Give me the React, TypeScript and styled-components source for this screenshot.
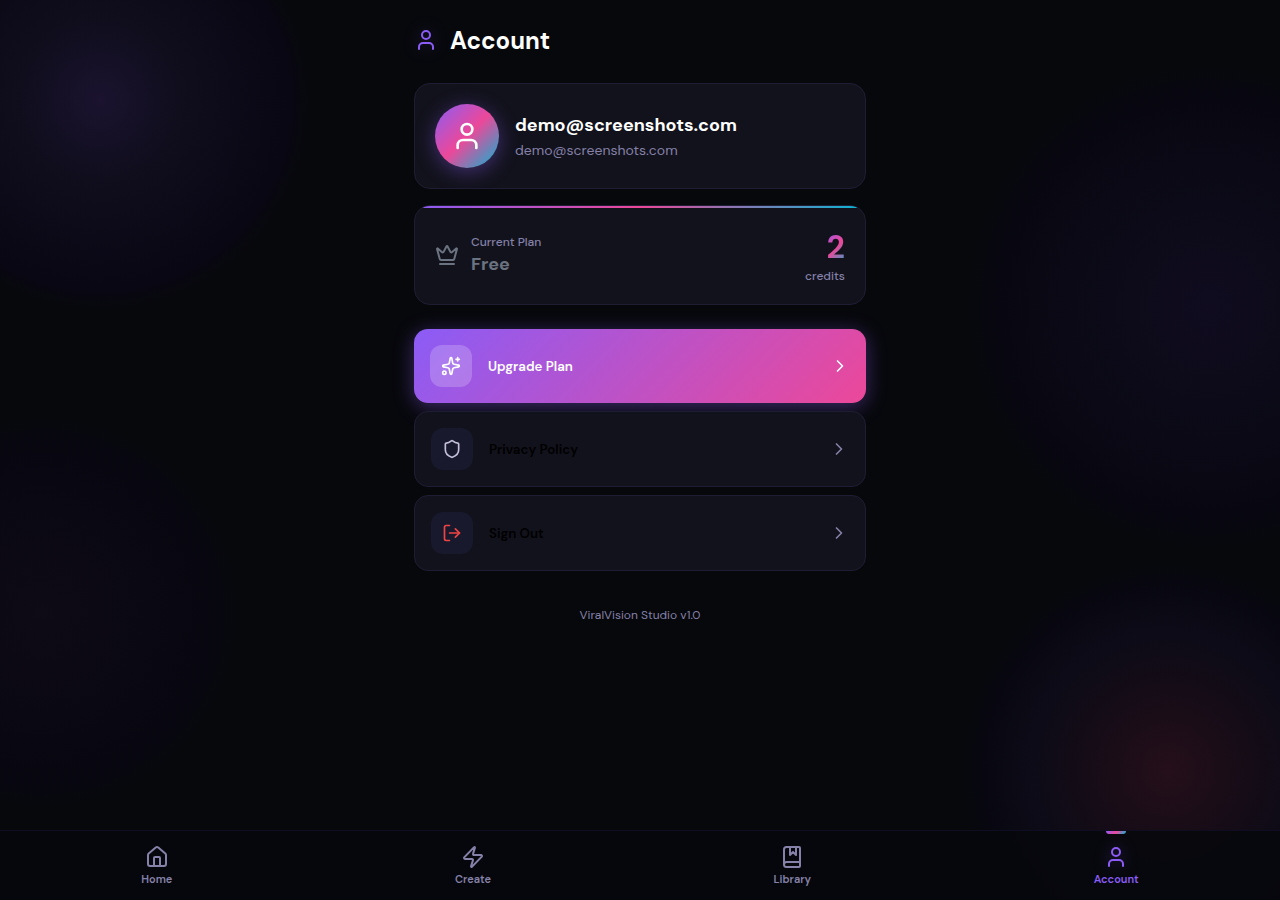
import React from 'react';
import styled, { createGlobalStyle, css } from 'styled-components';
import {
  BookMarked,
  ChevronRight,
  Crown,
  House,
  LogOut,
  Shield,
  Sparkles,
  User,
  Zap,
} from 'lucide-react';

const color = {
  page: '#07080c',
  card: '#12121c',
  border: '#1f1d33',
  tile: '#18192c',
  muted: '#8581a8',
  violet: '#8b5cf6',
  pink: '#ec4899',
  cyan: '#06b6d4',
};

const GlobalStyle = createGlobalStyle`
  *, *::before, *::after { box-sizing: border-box; }
  body {
    margin: 0;
    background: ${color.page};
    color: #fff;
    font-family: 'DM Sans', Inter, 'Liberation Sans', sans-serif;
    -webkit-font-smoothing: antialiased;
  }
`;

const Page = styled.div`
  display: flex;
  flex-direction: column;
  min-height: 100vh;
  background:
    radial-gradient(circle at 100px 100px, rgba(139, 80, 246, 0.15), rgba(120, 80, 230, 0.08) 80px, rgba(20, 0, 60, 0.15) 190px, transparent 210px),
    radial-gradient(circle at calc(100% - 72px) 307px, rgba(110, 50, 230, 0.09), rgba(90, 40, 220, 0.05) 120px, rgba(10, 0, 40, 0.15) 220px, transparent 242px),
    radial-gradient(circle at calc(100% - 112px) calc(100% - 130px), rgba(236, 62, 120, 0.13), rgba(190, 60, 150, 0.08) 80px, rgba(90, 60, 200, 0.06) 140px, rgba(10, 0, 40, 0.15) 190px, transparent 206px),
    radial-gradient(circle at 42px calc(100% - 288px), rgba(140, 50, 200, 0.05), rgba(10, 0, 40, 0.15) 176px, transparent 196px),
    ${color.page};
`;

const Main = styled.main`
  flex: 1;
  width: 100%;
  max-width: 500px;
  margin: 0 auto;
  padding: 24px;
`;

const Header = styled.header`
  display: flex;
  align-items: flex-start;
  gap: 12px;
  margin-bottom: 26px;

  svg {
    margin-top: 4px;
    color: ${color.violet};
    filter: drop-shadow(0 0 8px rgba(139, 92, 246, 0.3));
  }
`;

const Title = styled.h1`
  margin: 0;
  font-size: 24px;
  line-height: 33px;
  font-weight: 700;
`;

const Card = styled.section`
  position: relative;
  display: flex;
  align-items: center;
  padding: 20px;
  margin-bottom: 16px;
  overflow: hidden;
  background: ${color.card};
  border: 1px solid ${color.border};
  border-radius: 16px;
`;

const ProfileCard = styled(Card)`
  gap: 16px;
`;

const Avatar = styled.div`
  display: grid;
  place-items: center;
  width: 64px;
  height: 64px;
  border-radius: 50%;
  background: linear-gradient(135deg, ${color.violet}, ${color.pink} 50%, ${color.cyan});
  box-shadow: 0 4px 20px rgba(139, 92, 246, 0.4);
`;

const Name = styled.div`
  font-size: 18px;
  line-height: 26px;
  font-weight: 700;
`;

const Email = styled.div`
  margin-top: 2px;
  font-size: 14px;
  line-height: 20px;
  color: ${color.muted};
`;

const PlanCard = styled(Card)`
  gap: 12px;
  margin-bottom: 24px;
  color: #6b7280;

  &::before {
    content: '';
    position: absolute;
    inset: 0 0 auto;
    height: 2px;
    background: linear-gradient(90deg, ${color.violet}, ${color.pink} 50%, ${color.cyan});
  }
`;

const PlanInfo = styled.div`
  flex: 1;
`;

const Caption = styled.div`
  font-size: 12px;
  line-height: 16px;
  font-weight: 500;
  color: ${color.muted};
`;

const PlanName = styled.div`
  margin-top: 2px;
  font-size: 18px;
  line-height: 24px;
  font-weight: 700;
`;

const Credits = styled.div`
  text-align: right;
`;

const CreditCount = styled.div`
  width: max-content;
  margin-left: auto;
  font-size: 32px;
  line-height: 42px;
  font-weight: 700;
  background: linear-gradient(135deg, ${color.violet}, ${color.pink} 50%, ${color.cyan});
  background-clip: text;
  -webkit-background-clip: text;
  color: transparent;
`;

const Menu = styled.div`
  display: flex;
  flex-direction: column;
  gap: 8px;
`;

const IconTile = styled.span<{ $tint?: string }>`
  display: grid;
  place-items: center;
  width: 42px;
  height: 42px;
  border-radius: 12px;
  background: ${color.tile};
  color: ${({ $tint }) => $tint ?? '#c4c0dc'};
`;

const MenuButton = styled.button<{ $primary?: boolean }>`
  display: flex;
  align-items: center;
  gap: 16px;
  width: 100%;
  padding: 16px;
  border: 1px solid ${color.border};
  border-radius: 14px;
  background: ${color.card};
  color: #000;
  font-family: inherit;
  font-weight: 600;
  text-align: left;
  cursor: pointer;

  > svg { color: ${color.muted}; }

  ${({ $primary }) => $primary && css`
    border: 0;
    background: linear-gradient(135deg, ${color.violet}, ${color.pink});
    box-shadow: 0 4px 20px rgba(139, 92, 246, 0.4);
    color: #fff;

    > svg { color: #fff; }
    ${IconTile} { background: rgba(255, 255, 255, 0.2); }
  `}
`;

const MenuLabel = styled.span`
  flex: 1;
`;

const Version = styled.p`
  margin: 32px 0 0;
  text-align: center;
  font-size: 12px;
  line-height: 24px;
  color: ${color.muted};
`;

const NavBar = styled.nav`
  position: sticky;
  bottom: 0;
  display: flex;
  justify-content: space-around;
  padding-bottom: 4px;
  background: rgba(7, 8, 12, 0.9);
  border-top: 1px solid #0f0e20;
`;

const NavLink = styled.a<{ $active?: boolean }>`
  position: relative;
  display: flex;
  flex-direction: column;
  align-items: center;
  gap: 2px;
  padding: 14px 0 9px;
  font-size: 11px;
  line-height: 16px;
  font-weight: 600;
  text-decoration: none;
  color: ${({ $active }) => ($active ? color.violet : color.muted)};

  ${({ $active }) => $active && css`
    svg { filter: drop-shadow(0 0 8px rgba(139, 92, 246, 0.4)); }

    &::before {
      content: '';
      position: absolute;
      top: 0;
      left: calc(50% - 10px);
      width: 20px;
      height: 3px;
      border-radius: 0 0 3px 3px;
      background: linear-gradient(135deg, ${color.violet}, ${color.pink} 50%, ${color.cyan});
    }
  `}
`;

const menu = [
  { label: 'Upgrade Plan', icon: Sparkles, primary: true, tint: '#fff' },
  { label: 'Privacy Policy', icon: Shield },
  { label: 'Sign Out', icon: LogOut, tint: '#ef4444' },
];

const links = [
  { label: 'Home', icon: House },
  { label: 'Create', icon: Zap },
  { label: 'Library', icon: BookMarked },
  { label: 'Account', icon: User, active: true },
];

export default function App() {
  return (
    <Page>
      <GlobalStyle />
      <Main>
        <Header>
          <User size={24} />
          <Title>Account</Title>
        </Header>

        <ProfileCard>
          <Avatar>
            <User size={32} />
          </Avatar>
          <div>
            <Name>demo@screenshots.com</Name>
            <Email>demo@screenshots.com</Email>
          </div>
        </ProfileCard>

        <PlanCard>
          <Crown size={24} />
          <PlanInfo>
            <Caption>Current Plan</Caption>
            <PlanName>Free</PlanName>
          </PlanInfo>
          <Credits>
            <CreditCount>2</CreditCount>
            <Caption>credits</Caption>
          </Credits>
        </PlanCard>

        <Menu>
          {menu.map(({ label, icon: Icon, primary, tint }) => (
            <MenuButton key={label} type="button" $primary={primary}>
              <IconTile $tint={tint}>
                <Icon size={20} />
              </IconTile>
              <MenuLabel>{label}</MenuLabel>
              <ChevronRight size={20} />
            </MenuButton>
          ))}
        </Menu>

        <Version>ViralVision Studio v1.0</Version>
      </Main>

      <NavBar aria-label="Main">
        {links.map(({ label, icon: Icon, active }) => (
          <NavLink key={label} href="#" $active={active} aria-current={active ? 'page' : undefined}>
            <Icon size={24} />
            {label}
          </NavLink>
        ))}
      </NavBar>
    </Page>
  );
}
